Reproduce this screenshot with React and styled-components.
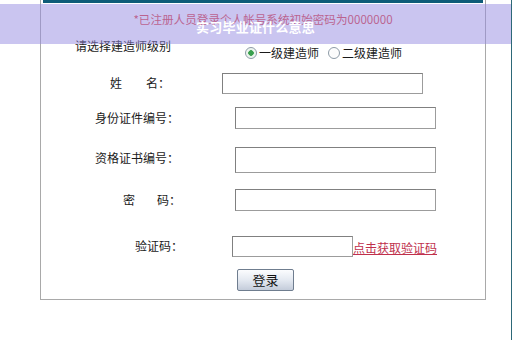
import React from "react";
import styled, { createGlobalStyle } from "styled-components";

const Global = createGlobalStyle`
  html, body { margin: 0; padding: 0; background: #fff; }
  body { font-family: "Noto Sans CJK SC", "Noto Sans", sans-serif; color: #222; }
  * { box-sizing: border-box; }
`;

const Page = styled.div`
  position: relative;
  width: 512px;
  height: 340px;
  overflow: hidden;
  border-right: 1px solid #2d6878;
`;

const Panel = styled.div`
  margin-left: 40px;
  width: 446px;
  border: 1px solid #a9a9a9;
  border-top: none;
  padding-bottom: 8px;
`;

const HeaderBar = styled.div`
  height: 3px;
  margin: 0 2px;
  background: #0e5c78;
`;

const Notice = styled.div`
  margin-top: 8px;
  line-height: 16px;
  font-size: 11.6px;
  text-align: center;
  color: #e03a3a;
`;

const Row = styled.div`
  display: flex;
  align-items: ${(p) => p.$align || "center"};
  margin-top: ${(p) => p.$mt}px;
  padding-left: ${(p) => p.$pl}px;
  height: ${(p) => p.$h}px;
`;

const Label = styled.div`
  width: ${(p) => p.$w}px;
  flex: none;
  font-size: 12px;
  line-height: 20px;
  color: #1a1a1a;
  margin-top: ${(p) => p.$dy || 0}px;
`;

const Spread = styled.span`
  display: flex;
  justify-content: space-between;
  width: ${(p) => p.$w}px;
`;

const Input = styled.input`
  width: ${(p) => p.$w}px;
  height: ${(p) => p.$h}px;
  border: 1px solid #9c9c9c;
  border-top-color: #808080;
  border-left-color: #808080;
  background: #fff;
  padding: 0 3px;
  font-size: 12px;
  outline: none;
`;

const Radios = styled.div`
  display: flex;
  align-items: center;
  gap: 9px;
  align-self: flex-end;
  line-height: 18px;
  font-size: 12px;
  color: #1a1a1a;
`;

const RadioItem = styled.label`
  display: flex;
  align-items: center;
  gap: 2px;
`;

const Dot = styled.span`
  width: 12px;
  height: 12px;
  border-radius: 50%;
  border: 1px solid #8d9aa6;
  background: radial-gradient(circle, ${(p) => (p.$on ? "#3aa04e 0 2.5px, #e6f2e8 3px" : "#fafafa 0")}, #fff 100%);
  display: inline-block;
`;

const Link = styled.a`
  font-size: 12px;
  line-height: 18px;
  color: #c0304c;
  text-decoration: underline;
  align-self: flex-end;
`;

const Button = styled.button`
  width: 57px;
  height: 22px;
  padding: 0;
  border: 1px solid #6f7d8f;
  border-radius: 2px;
  background: linear-gradient(#fbfcfe, #e4e9f1 50%, #c4ccda);
  font-family: "Noto Sans CJK SC", sans-serif;
  font-size: 13px;
  color: #111;
  line-height: 18px;
`;

const Overlay = styled.div`
  position: absolute;
  top: 4px;
  left: 0;
  width: 100%;
  height: 40px;
  padding-top: 4px;
  display: flex;
  align-items: center;
  justify-content: center;
  background: rgba(150, 140, 226, 0.5);
  color: #fff;
  font-weight: 700;
  font-size: 13px;
  letter-spacing: 0.2px;
`;

export default function App() {
  return (
    <Page>
      <Global />
      <Panel>
        <HeaderBar />
        <Notice>*已注册人员登录个人帐号系统初始密码为0000000</Notice>
        <Row $mt={9} $pl={34} $h={26} $align="flex-start">
          <Label $w={170}>请选择建造师级别</Label>
          <Radios>
            <RadioItem>
              <Dot $on />
              一级建造师
            </RadioItem>
            <RadioItem>
              <Dot />
              二级建造师
            </RadioItem>
          </Radios>
        </Row>
        <Row $mt={11} $pl={69} $h={21}>
          <Label $w={112} $dy={-2}>
            <Spread $w={60}>
              <span>姓</span>
              <span>名：</span>
            </Spread>
          </Label>
          <Input $w={201} $h={21} />
        </Row>
        <Row $mt={13} $pl={54} $h={22}>
          <Label $w={140}>身份证件编号：</Label>
          <Input $w={201} $h={22} />
        </Row>
        <Row $mt={18} $pl={54} $h={26}>
          <Label $w={140} $dy={-4}>资格证书编号：</Label>
          <Input $w={201} $h={26} />
        </Row>
        <Row $mt={16} $pl={82} $h={22}>
          <Label $w={112}>
            <Spread $w={58}>
              <span>密</span>
              <span>码：</span>
            </Spread>
          </Label>
          <Input $w={201} $h={22} />
        </Row>
        <Row $mt={25} $pl={94} $h={21}>
          <Label $w={97} $dy={-2}>验证码：</Label>
          <Input $w={121} $h={21} />
          <Link>点击获取验证码</Link>
        </Row>
        <Row $mt={12} $pl={196} $h={22}>
          <Button>登录</Button>
        </Row>
      </Panel>
      <Overlay>实习毕业证什么意思</Overlay>
    </Page>
  );
}
